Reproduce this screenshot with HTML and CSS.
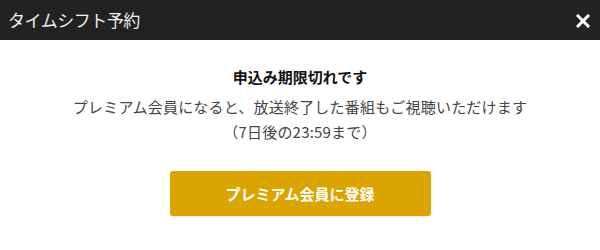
FILE: index.html
```html
<!DOCTYPE html>
<html lang="ja">
<head>
    <meta charset="UTF-8">
    <meta name="viewport" content="width=device-width, initial-scale=1.0">
    <title>タイムシフト予約</title>
    <link rel="stylesheet" href="styles.css">
</head>
<body>
    <div class="dialog">
        <div class="dialog-head">
            <span class="dialog-title">タイムシフト予約</span>
            <span class="dialog-close">
                <svg width="14" height="14" viewBox="0 0 14 14">
                    <path d="M2 2L12 12M12 2L2 12" stroke="#fff" stroke-width="3" stroke-linecap="square"/>
                </svg>
            </span>
        </div>
        <div class="dialog-body">
            <p class="lead">申込み期限切れです</p>
            <p class="desc">プレミアム会員になると、放送終了した番組もご視聴いただけます<br>（7日後の23:59まで）</p>
            <a class="btn-premium" href="#">プレミアム会員に登録</a>
        </div>
    </div>
</body>
</html>
```

FILE: styles.css
```css
*{
    margin: 0px;
    padding: 0px;
}
body{
    width: 600px;
    height: 250px;
    background-color: #fff;
    font-family: "Noto Sans CJK JP", "Noto Sans", sans-serif;
}
.dialog-head{
    height: 40px;
    background-color: #222;
    display: flex;
    align-items: center;
    justify-content: space-between;
    padding: 0 10px 0 8px;
}
.dialog-title{
    color: #eee;
    font-size: 17px;
    line-height: 40px;
    letter-spacing: -0.5px;
}
.dialog-close{
    display: flex;
    width: 14px;
    height: 14px;
    margin-top: 1px;
}
.dialog-body{
    display: flex;
    flex-direction: column;
    align-items: center;
    text-align: center;
    color: #333;
}
.lead{
    margin-top: 26px;
    font-size: 15px;
    font-weight: bold;
    line-height: 22px;
    color: #111;
}
.desc{
    margin-top: 6px;
    font-size: 15px;
    line-height: 25px;
    letter-spacing: 0.2px;
    color: #444;
}
.btn-premium{
    margin-top: 27px;
    width: 261px;
    height: 45px;
    line-height: 45px;
    background-color: #dba400;
    border-radius: 3px;
    color: #fff;
    font-size: 15px;
    font-weight: bold;
    text-decoration: none;
    box-shadow: 0 1px 2px rgba(0, 0, 0, .08);
}
```
